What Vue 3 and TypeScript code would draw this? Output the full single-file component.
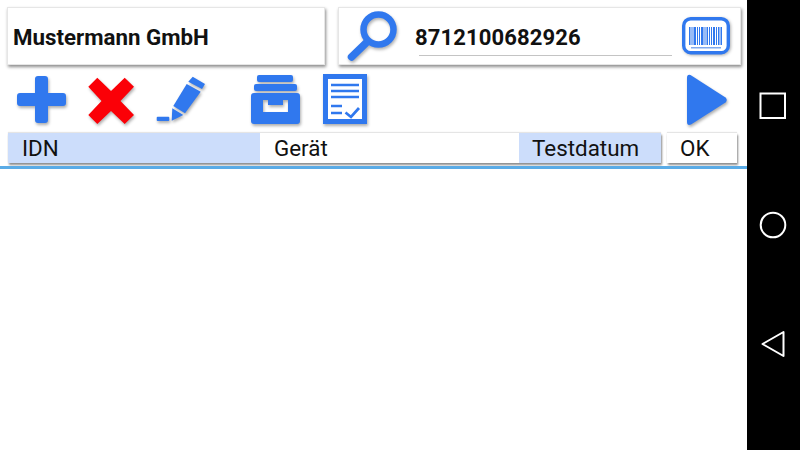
<script setup lang="ts">
const bars: [number, number][] = [
  [7, 1.5], [9.5, 1], [11.5, 2.5], [15, 1], [17, 1], [19, 2.5], [22.5, 1], [24.5, 1.5], [27, 1], [29, 1], [31, 2], [34, 1], [36, 1.5], [38.5, 1.5]
];
const columns = [
  { label: 'IDN', cls: 'idn' },
  { label: 'Gerät', cls: 'geraet' },
  { label: 'Testdatum', cls: 'datum' }
];
</script>

<template>
  <div class="screen">
    <main class="content">
      <section class="top">
        <div class="card company">Mustermann GmbH</div>
        <div class="card search">
          <svg class="lens" width="52" height="52" viewBox="0 0 52 52">
            <circle cx="33.5" cy="19.5" r="15" fill="none" stroke="#3078ee" stroke-width="6.5" />
            <path d="M21 33 L6.5 47" stroke="#3078ee" stroke-width="7.5" stroke-linecap="round" />
          </svg>
          <div class="code">
            <span class="code-text">8712100682926</span>
          </div>
          <svg class="barcode" width="48" height="38" viewBox="0 0 48 38">
            <rect x="1.7" y="1.7" width="44.6" height="34" rx="7" fill="#fff" stroke="#3078ee" stroke-width="3.4" />
            <rect v-for="(b, i) in bars" :key="i" :x="b[0]" y="10" :width="b[1]" height="18" fill="#3078ee" />
            <rect x="9" y="30" width="30" height="1.5" fill="#7fa9ef" />
          </svg>
        </div>
      </section>

      <section class="tools">
        <svg class="ic plus" width="52" height="50" viewBox="0 0 52 50">
          <path d="M22 0 h7 a3 3 0 0 1 3 3 v14 h15 a3 3 0 0 1 3 3 v7 a3 3 0 0 1 -3 3 h-15 v14 a3 3 0 0 1 -3 3 h-7 a3 3 0 0 1 -3 -3 v-14 h-15 a3 3 0 0 1 -3 -3 v-7 a3 3 0 0 1 3 -3 h15 v-14 a3 3 0 0 1 3 -3 z" fill="#3078ee" />
        </svg>
        <svg class="ic cross" width="50" height="50" viewBox="0 0 50 50">
          <path d="M1.3 9.7 L10.3 0.7 L24 14 L37.7 0.7 L47 9.7 L33.5 24 L47 38 L37.7 47 L24 34 L10.3 47 L1.3 38 L14.5 24 Z" fill="#fb0007" />
        </svg>
        <svg class="ic pen" width="52" height="50" viewBox="0 0 52 50">
          <path d="M36.7 0.7 L49 8 L46 13 L32.3 5.7 Z" fill="#3078ee" />
          <path d="M30.7 8 L44.7 15.7 L29 37.3 L17.3 30 Z" fill="#3078ee" />
          <path d="M16.3 32.3 L27.3 39 L15.7 44.7 Z" fill="#3078ee" />
          <rect x="0.7" y="40.7" width="12.6" height="4.3" rx="1" fill="#3078ee" />
        </svg>
        <svg class="ic archive" width="53" height="52" viewBox="0 0 53 52">
          <rect x="7" y="0" width="36" height="7" rx="2" fill="#3078ee" />
          <rect x="4" y="9" width="43" height="7" rx="2" fill="#3078ee" />
          <path fill-rule="evenodd" d="M4 18 h43 a3 3 0 0 1 3 3 v25 a3 3 0 0 1 -3 3 h-43 a3 3 0 0 1 -3 -3 v-25 a3 3 0 0 1 3 -3 z M13 25 v12 h25 v-12 h-5 v5 h-15 v-5 z" fill="#3078ee" />
        </svg>
        <svg class="ic doc" width="46" height="52" viewBox="0 0 46 52">
          <rect x="2.5" y="2.5" width="39" height="45" fill="#fff" stroke="#3078ee" stroke-width="5" />
          <path d="M8 11 H36 M8 17 H36 M8 23 H36 M8 32 H19 M8 39 H19" stroke="#3078ee" stroke-width="2.5" />
          <path d="M22.5 38.5 L28 43 L36 34" fill="none" stroke="#3078ee" stroke-width="2.7" />
        </svg>
        <svg class="ic play" width="43" height="54" viewBox="0 0 43 54">
          <path d="M4.5 1 L39.5 23.5 Q42 26 39.5 28.5 L5 50.5 Q1 52 1 48 V4 Q1 0 4.5 1 Z" fill="#3078ee" />
        </svg>
      </section>

      <section class="header">
        <div class="head-main">
          <div v-for="c in columns" :key="c.cls" class="cell" :class="c.cls">{{ c.label }}</div>
        </div>
        <div class="cell ok">OK</div>
      </section>
      <div class="rule"></div>
    </main>

    <nav class="nav">
      <svg width="28" height="28" viewBox="0 0 28 28">
        <rect x="1.5" y="1.5" width="24.5" height="24.5" fill="none" stroke="#fff" stroke-width="2" />
      </svg>
      <svg width="28" height="28" viewBox="0 0 28 28">
        <circle cx="14" cy="14" r="12.3" fill="none" stroke="#fff" stroke-width="2" />
      </svg>
      <svg width="26" height="28" viewBox="0 0 26 28">
        <path d="M23.5 2 V26 L2.5 14 Z" fill="none" stroke="#fff" stroke-width="2" stroke-linejoin="round" />
      </svg>
    </nav>
  </div>
</template>

<style scoped>
.screen {
  display: flex;
  width: 800px;
  height: 450px;
  overflow: hidden;
  background: #fff;
  font-family: Roboto, "Liberation Sans", sans-serif;
  color: #111;
}
.content {
  flex: 1;
  min-width: 0;
  display: flex;
  flex-direction: column;
}
.top {
  display: flex;
  gap: 13px;
  padding: 7px 6px 0 7px;
}
.card {
  height: 58px;
  box-sizing: border-box;
  background: #fff;
  border: 1px solid #e6e6e6;
  box-shadow: 1px 2px 3px rgba(0, 0, 0, 0.45);
  display: flex;
  align-items: center;
}
.company {
  width: 318px;
  padding: 2px 0 0 5px;
  font-size: 22.3px;
  font-weight: 700;
}
.search {
  width: 403px;
  padding-left: 6px;
}
.lens {
  flex: none;
  filter: drop-shadow(1px 2px 1.5px rgba(0, 0, 0, 0.3));
}
.code {
  width: 253px;
  height: 34px;
  margin: 6px 0 0 22px;
  padding-bottom: 3px;
  box-sizing: border-box;
  border-bottom: 1px solid #c4c4c4;
  display: flex;
  align-items: center;
}
.code-text {
  margin-left: -4px;
  font-size: 22px;
  font-weight: 700;
  letter-spacing: 0.12px;
}
.barcode {
  flex: none;
  margin-left: 10px;
  filter: drop-shadow(1px 1px 1.5px rgba(0, 0, 0, 0.3));
}
.tools {
  display: flex;
  align-items: flex-start;
  height: 60px;
  margin-top: 9px;
  padding-left: 16px;
}
.ic {
  flex: none;
  filter: drop-shadow(1px 2px 1.5px rgba(0, 0, 0, 0.32));
}
.plus { margin-top: 2px; }
.cross { margin: 3px 0 0 19px; }
.pen { margin: 2px 0 0 19px; }
.archive { margin: 1px 0 0 42px; }
.doc { margin: 0 0 0 20px; }
.play { margin-left: auto; margin-right: 18px; }
.header {
  display: flex;
  height: 30px;
  margin-top: -1px;
  padding: 0 10px 0 8px;
  gap: 6px;
}
.head-main {
  display: flex;
  width: 653px;
  box-shadow: 1px 2px 2px rgba(0, 0, 0, 0.45), 0 -1px 1px rgba(0, 0, 0, 0.1);
}
.cell {
  box-sizing: border-box;
  display: flex;
  align-items: center;
  font-size: 22.4px;
  line-height: 30px;
}
.idn {
  width: 252px;
  padding-left: 14px;
  background: #ccddfb;
}
.geraet {
  width: 259px;
  padding-left: 14px;
  background: #fff;
}
.datum {
  width: 142px;
  padding-left: 13px;
  background: #ccddfb;
}
.ok {
  width: 70px;
  padding-left: 13px;
  background: #fff;
  box-shadow: 1px 2px 2px rgba(0, 0, 0, 0.45), 0 -1px 1px rgba(0, 0, 0, 0.1);
}
.rule {
  height: 3px;
  margin-top: 3px;
  background: #5aabe6;
}
.nav {
  flex: none;
  width: 53px;
  background: #000;
  display: flex;
  flex-direction: column;
  align-items: center;
  justify-content: space-between;
  box-sizing: border-box;
  padding: 92px 2px 92px 0;
}
</style>
